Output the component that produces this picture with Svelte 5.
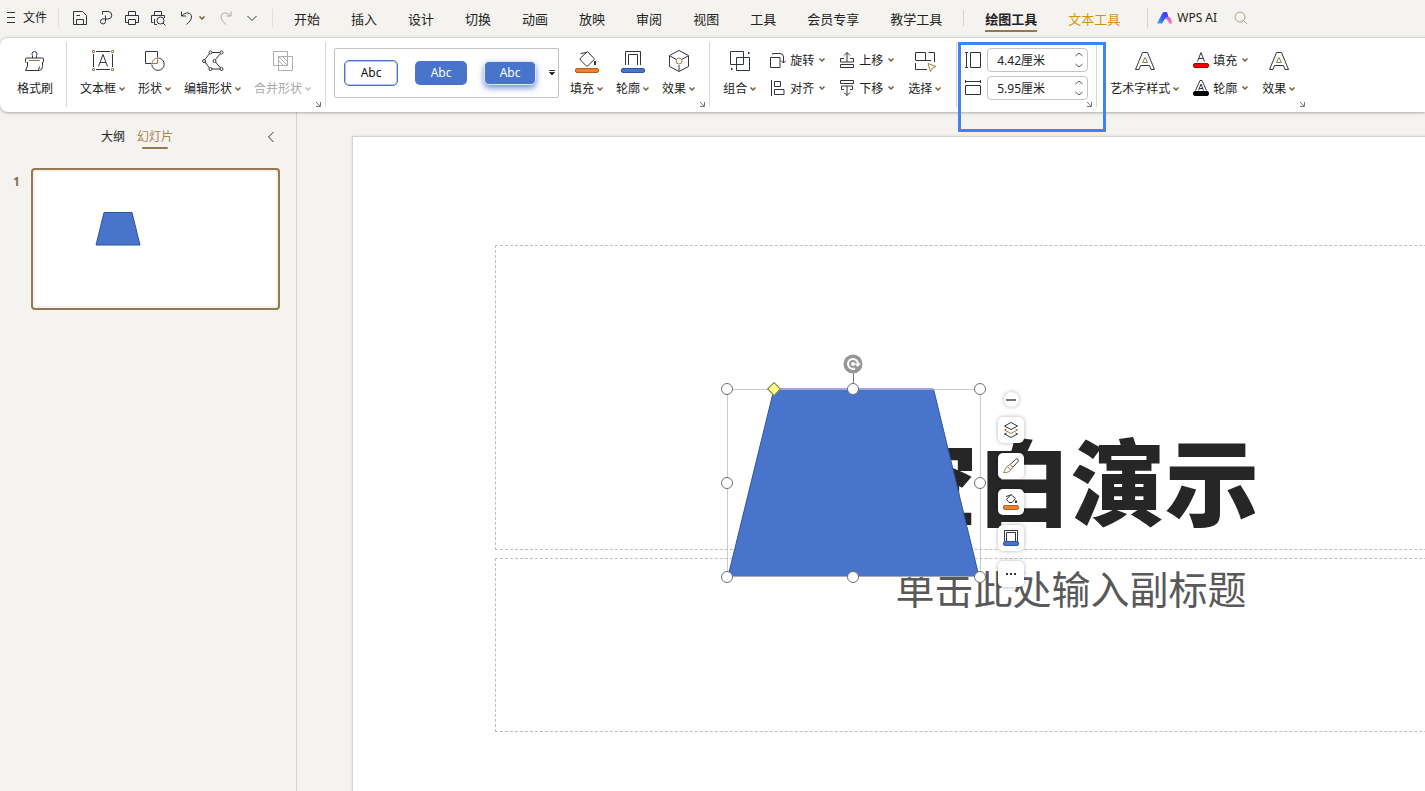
<script>
	let activeTab = $state('绘图工具');
	let sideTab = $state('幻灯片');
	let shapeHeight = $state('4.42厘米');
	let shapeWidth = $state('5.95厘米');

	const tabs = ['开始', '插入', '设计', '切换', '动画', '放映', '审阅', '视图', '工具', '会员专享', '教学工具'];

	const shapeTools = [
		{ icon: 'textbox', label: '文本框' },
		{ icon: 'shapes', label: '形状' },
		{ icon: 'editpoints', label: '编辑形状' },
		{ icon: 'merge', label: '合并形状', disabled: true }
	];

	const styleTools = [
		{ icon: 'fill', label: '填充' },
		{ icon: 'outline', label: '轮廓' },
		{ icon: 'effect', label: '效果' }
	];

	const handles = ['nw', 'n', 'ne', 'w', 'e', 'sw', 's', 'se'];

	const floatTools = [
		{ icon: 'layers', label: '图层' },
		{ icon: 'brush', label: '格式刷' },
		{ icon: 'minifill', label: '填充' },
		{ icon: 'minioutline', label: '轮廓' },
		{ icon: 'dots', label: '更多' }
	];

	function step(value, by) {
		return (parseFloat(value) + by).toFixed(2) + '厘米';
	}
</script>

{#snippet caret()}
	<svg class="caret" width="6" height="4" viewBox="0 0 6 4"><path d="M.5 .5L3 3L5.5 .5" /></svg>
{/snippet}

{#snippet launcher()}
	<button class="launcher" aria-label="更多设置">
		<svg width="7" height="7" viewBox="0 0 7 7"><path d="M1 1L5 5M5.5 1V5.5H1" /></svg>
	</button>
{/snippet}

{#snippet icon(name)}
	{#if name === 'painter'}
		<svg width="24" height="24" viewBox="0 0 24 24">
			<path d="M9.5 9V6.500a3 3 0 0 1-.500-1.500a2.500 2.500 0 0 1 5 0a3 3 0 0 1-.500 1.500V9" />
			<path d="M3.5 13.500a1 1 0 0 1-1-1V10a1 1 0 0 1 1-1H19.500a1 1 0 0 1 1 1V12.500a1 1 0 0 1-1 1" />
			<path class="gold" d="M6 11.500H17" />
			<path d="M4.500 13V17L2.500 21.500H16.500Q19.500 21 19.500 17.500V13M15.500 21L16.500 17.500" />
		</svg>
	{:else if name === 'textbox'}
		<svg width="24" height="24" viewBox="0 0 24 24">
			<path d="M5 2.5H19M5 20.5H19M2.5 5V18M21.5 5V18" />
			<path d="M7.5 17.5L12 5.5L16.5 17.5M9 13.5H15" />
			<path class="gold" d="M1.5 1.5h2v2h-2zM20.5 1.5h2v2h-2zM1.5 19.5h2v2h-2zM20.5 19.5h2v2h-2z" />
		</svg>
	{:else if name === 'shapes'}
		<svg width="24" height="24" viewBox="0 0 24 24">
			<path d="M8.5 14.5H2.5V2.5H14.5V8.5" />
			<path d="M15.5 9a6.2 6.2 0 1 1-6.7 6.5" />
			<path class="gold" d="M9 14.5a6.2 6.2 0 0 1 5.5-5.500v5.500z" />
		</svg>
	{:else if name === 'editpoints'}
		<svg width="24" height="24" viewBox="0 0 24 24">
			<path d="M11 3.5H19M8.5 4.5L4 10.5M4 13L8.5 19M11 20H19M19.5 4.5L14.5 10.5M14.5 13L19.5 19" />
			<circle cx="9.5" cy="3.5" r="1.5" /><circle cx="20.5" cy="3.5" r="1.5" />
			<circle cx="3" cy="12" r="1.5" /><circle cx="13.5" cy="12" r="1.5" />
			<circle cx="9.5" cy="20" r="1.5" /><circle cx="20.5" cy="20" r="1.5" />
		</svg>
	{:else if name === 'merge'}
		<svg width="24" height="24" viewBox="0 0 24 24">
			<path d="M2.5 2.5h14v14h-14zM7.5 7.5h14v14h-14zM8 8L16 16M8 12L12 16M12 8L16 12" />
		</svg>
	{:else if name === 'fill'}
		<svg width="24" height="24" viewBox="0 0 24 24">
			<path d="M12.5 2.5L19 9.5a1 1 0 0 1 0 1.3L13 16.7a1.5 1.5 0 0 1-2 0L5.5 11a1.5 1.5 0 0 1 0-2zM5.5 4.5L12 3.5" />
			<path class="thick" d="M20 12v4" />
			<rect class="orange" x=".5" y="19.5" width="23" height="4" rx="1.5" />
		</svg>
	{:else if name === 'outline'}
		<svg width="24" height="24" viewBox="0 0 24 24">
			<path d="M4.5 16V2.5H19.5V16M7.5 16V5.5H16.5V16" />
			<rect class="blue" x=".5" y="19.5" width="23" height="4" rx="1.5" />
		</svg>
	{:else if name === 'effect'}
		<svg width="24" height="24" viewBox="0 0 24 24">
			<path d="M12 1.5L21.5 6.5V17.5L12 22.5L2.5 17.5V6.5zM3 7L9 10.3M21 7L15 10.3M12 16V22" />
			<circle class="gold" cx="12" cy="12" r="3" />
		</svg>
	{:else if name === 'group'}
		<svg width="24" height="24" viewBox="0 0 24 24">
			<path d="M2.5 2.5h13v13h-13zM8.5 8.5h13v13h-13z" />
			<path class="thick" d="M20 4h1.5M3 20h1.5" />
		</svg>
	{:else if name === 'select'}
		<svg width="24" height="24" viewBox="0 0 24 24">
			<path d="M2.5 11V3.5H12.5V11.5H2.5M15.5 3.5H21.5V13M2.5 14V20.5H14M12.5 11.5H18" />
			<path class="gold" d="M15 14.5L23 17.5L19.5 19L17.5 22.5z" />
		</svg>
	{:else if name === 'wordart'}
		<svg width="24" height="24" viewBox="0 0 24 24">
			<path d="M2.500 20.500L9.500 3.500H14.500L21.500 20.500H18L16.500 16.500H7.500L6 20.500z" />
			<path class="gold" d="M12 8.500L14.500 13.500H9.500z" />
		</svg>
	{:else if name === 'rotate'}
		<svg width="16" height="16" viewBox="0 0 16 16">
			<path d="M.5 5.5h9.5v10H.5zM2.5 2.5V1.5H10a3.5 3.5 0 0 1 3.5 3.5v6M11 8.5l2.5 2.5L16 8.5" />
		</svg>
	{:else if name === 'align'}
		<svg width="16" height="16" viewBox="0 0 16 16">
			<path d="M1.5 0V16M4.5 1.5h6v5h-6zM4.5 9.5h9.5v5H4.5z" />
		</svg>
	{:else if name === 'raise'}
		<svg width="16" height="16" viewBox="0 0 16 16">
			<path d="M1.5 12.5h13v3H1.5zM8 10V.5M5 3.5l3-3l3 3M5 6.5H1.5v3.5h13V6.5H11" />
		</svg>
	{:else if name === 'lower'}
		<svg width="16" height="16" viewBox="0 0 16 16">
			<path d="M1.5 .5h13v3H1.5zM8 6V15.5M5 12.5l3 3l3-3M5 9.5H2.5V6H13.5v3.5H11" />
		</svg>
	{:else if name === 'height'}
		<svg width="16" height="16" viewBox="0 0 16 16"><path d="M0 .5H3M1.5 .5V15.5M0 15.5H3M5.5 .5h10v15h-10z" /></svg>
	{:else if name === 'width'}
		<svg width="16" height="16" viewBox="0 0 16 16"><path d="M.5 0V3M.5 1.5H15.5M15.5 0V3M.5 5.5h15v9H.5z" /></svg>
	{:else if name === 'textfill'}
		<svg width="16" height="16" viewBox="0 0 16 16">
			<path d="M4.5 9.5L8 .5L11.5 9.5M5.5 6.5H10.5" />
			<rect class="red" x=".5" y="11.5" width="15" height="4" rx="1.5" />
		</svg>
	{:else if name === 'textoutline'}
		<svg width="16" height="16" viewBox="0 0 16 16">
			<path d="M2.5 10.5L7 .5H9L13.5 10.5M5.5 10.5L8 4L10.5 10.5M6 8.5H10" />
			<rect class="black" x=".5" y="11.5" width="15" height="4" rx="1.5" />
		</svg>
	{:else if name === 'save'}
		<svg width="16" height="16" viewBox="0 0 16 16">
			<path d="M1.5 1.5h9l4 4v9H1.5zM4.5 14V9.5h7V14M4.5 5.5H8" />
		</svg>
	{:else if name === 'pdf'}
		<svg width="16" height="16" viewBox="0 0 16 16">
			<path d="M4.5 4.5V1.5H10a3.5 3.5 0 0 1 0 7.5H4.5a2.5 2.5 0 1 0 3 2.5V5.5" />
		</svg>
	{:else if name === 'print'}
		<svg width="16" height="16" viewBox="0 0 16 16">
			<path d="M4.5 5V1.5h7V5M4 12.5H1.5V5.5h13v7H12M4.5 9.5h7v5h-7z" />
		</svg>
	{:else if name === 'preview'}
		<svg width="16" height="16" viewBox="0 0 16 16">
			<path d="M4.5 5V1.5h7V5M3.5 12.5H1.5V5.5h13V8M4.5 9V14.5H7M13 13l2.5 2.5" />
			<circle cx="10.5" cy="10.5" r="3.5" />
		</svg>
	{:else if name === 'undo'}
		<svg width="16" height="16" viewBox="0 0 16 16"><path d="M2.5 1.5v4.5H7M3 6C6 1.5 12.5 2 12.5 7C12.5 10 10 12 7.5 14.5" /></svg>
	{:else if name === 'redo'}
		<svg width="16" height="16" viewBox="0 0 16 16"><path d="M13 1.5v4.5H8.5M12.5 6C9.5 1.5 3 2 3 7C3 10 5.5 12 8 14.5" /></svg>
	{:else if name === 'down'}
		<svg width="16" height="16" viewBox="0 0 16 16"><path d="M3.5 6L8 10.5L12.5 6" /></svg>
	{:else if name === 'layers'}
		<svg width="16" height="16" viewBox="0 0 16 16">
			<path d="M8 .5L14.5 4L8 7.5L1.5 4zM3.5 11L1.5 12L8 15.5L14.5 12L12.5 11" />
			<path class="gold" d="M3.5 7L1.5 8L8 11.5L14.5 8L12.5 7" />
		</svg>
	{:else if name === 'brush'}
		<svg width="16" height="16" viewBox="0 0 16 16">
			<path d="M7 6.5L12.5 1.5a1.5 1.5 0 0 1 2.5 2L10 9" />
			<path class="gold" d="M7 6.5L10 9L7.5 12.5C5.5 14.5 3 14.5 .5 14.5C2 13 2 10.5 4 8.5zM4.5 8.5L7.5 12" />
		</svg>
	{:else if name === 'minifill'}
		<svg width="16" height="16" viewBox="0 0 16 16">
			<path d="M8 .5L12.5 4.5L9 8.5H6L3.5 5.5zM3 2.5L8 1" />
			<path class="thick" d="M13 6.5v2.5" />
			<rect class="orange" x=".5" y="11.5" width="15" height="4" rx="1.5" />
		</svg>
	{:else if name === 'minioutline'}
		<svg width="16" height="16" viewBox="0 0 16 16">
			<path d="M1.5 12V.5h13V12M3.5 12V2.5h9V12" />
			<rect class="blue" x=".5" y="11.5" width="15" height="4" rx="1.5" />
		</svg>
	{:else if name === 'dots'}
		<svg width="16" height="16" viewBox="0 0 16 16"><path class="thick" d="M3 8h2M7 8h2M11 8h2" /></svg>
	{/if}
{/snippet}

{#snippet bigTool(name, label, disabled = false)}
	<button class="big-tool" {disabled}>
		{@render icon(name)}
		<span class="label">{label}{@render caret()}</span>
	</button>
{/snippet}

{#snippet smallTool(name, label)}
	<button class="small-tool">
		{@render icon(name)}
		<span>{label}</span>
		{@render caret()}
	</button>
{/snippet}

<div class="app">
	<header class="topbar">
		<button class="file">
			<svg width="9" height="12" viewBox="0 0 9 12"><path d="M0 .5H8M0 5.5H8M0 10.5H8" /></svg>
			文件
		</button>
		<div class="quick">
			<button aria-label="保存">{@render icon('save')}</button>
			<button aria-label="输出为PDF">{@render icon('pdf')}</button>
			<button aria-label="打印">{@render icon('print')}</button>
			<button aria-label="打印预览">{@render icon('preview')}</button>
		</div>
		<div class="history">
			<button class="undo" aria-label="撤销">{@render icon('undo')}{@render caret()}</button>
			<button class="redo" aria-label="恢复" disabled>{@render icon('redo')}</button>
			<button aria-label="自定义">{@render icon('down')}</button>
		</div>
		<nav class="tabs">
			{#each tabs as tab}
				<button class:active={activeTab === tab} onclick={() => (activeTab = tab)}>{tab}</button>
			{/each}
		</nav>
		<nav class="tabs context">
			<button class:active={activeTab === '绘图工具'} onclick={() => (activeTab = '绘图工具')}>绘图工具</button>
			<button class="text-tab" class:active={activeTab === '文本工具'} onclick={() => (activeTab = '文本工具')}>文本工具</button>
		</nav>
		<div class="ai">
			<button>
				<svg width="16" height="14" viewBox="0 0 16 14">
					<defs>
						<linearGradient id="ai-a" x1="0" y1="1" x2="1" y2="0">
							<stop offset="0" stop-color="#35b6ff" />
							<stop offset=".5" stop-color="#3a55ff" />
							<stop offset="1" stop-color="#4a35f0" />
						</linearGradient>
						<linearGradient id="ai-b" x1="0" y1="0" x2="1" y2="1">
							<stop offset="0" stop-color="#d43cff" />
							<stop offset="1" stop-color="#ff8c8c" />
						</linearGradient>
					</defs>
					<path fill="url(#ai-a)" stroke="none" d="M0 12.5L5.5 2Q6 1 7.5 1H10L11.5 6L8.5 7L5 12.5z" />
					<path fill="url(#ai-b)" stroke="none" d="M8 7.5Q13 4.5 14 8L15.5 12.5H12Q11 8 8 7.5z" />
				</svg>
				WPS AI
			</button>
			<button class="search" aria-label="搜索">
				<svg width="14" height="14" viewBox="0 0 14 14"><circle cx="6" cy="6" r="5" /><path d="M9.5 9.5L13 13" /></svg>
			</button>
		</div>
	</header>

	<section class="ribbon">
		<div class="group paint">
			<button class="big-tool">{@render icon('painter')}<span class="label">格式刷</span></button>
		</div>
		<div class="group">
			{#each shapeTools as t}
				{@render bigTool(t.icon, t.label, t.disabled)}
			{/each}
			{@render launcher()}
		</div>
		<div class="group styles">
			<div class="gallery">
				<button class="preset">Abc</button>
				<button class="preset solid">Abc</button>
				<button class="preset solid raised">Abc</button>
				<button class="more" aria-label="更多样式">
					<svg width="8" height="6" viewBox="0 0 8 6"><path d="M1 .5H7M1.5 2.5L4 5L6.5 2.5z" /></svg>
				</button>
			</div>
			{#each styleTools as t}
				{@render bigTool(t.icon, t.label)}
			{/each}
			{@render launcher()}
		</div>
		<div class="group wide">
			{@render bigTool('group', '组合')}
			<div class="stack">
				{@render smallTool('rotate', '旋转')}
				{@render smallTool('align', '对齐')}
			</div>
			<div class="stack">
				{@render smallTool('raise', '上移')}
				{@render smallTool('lower', '下移')}
			</div>
			{@render bigTool('select', '选择')}
		</div>
		<div class="group size">
			<div class="stack">
				<div class="field">
					<label for="shape-height" aria-label="高度">{@render icon('height')}</label>
					<div class="spin">
						<input id="shape-height" type="text" bind:value={shapeHeight} />
						<div class="steps">
							<button aria-label="增大高度" onclick={() => (shapeHeight = step(shapeHeight, 0.1))}>
								<svg width="8" height="5" viewBox="0 0 8 5"><path d="M.5 4L4 1L7.5 4" /></svg>
							</button>
							<button aria-label="减小高度" onclick={() => (shapeHeight = step(shapeHeight, -0.1))}>
								<svg width="8" height="5" viewBox="0 0 8 5"><path d="M.5 1L4 4L7.5 1" /></svg>
							</button>
						</div>
					</div>
				</div>
				<div class="field">
					<label for="shape-width" aria-label="宽度">{@render icon('width')}</label>
					<div class="spin">
						<input id="shape-width" type="text" bind:value={shapeWidth} />
						<div class="steps">
							<button aria-label="增大宽度" onclick={() => (shapeWidth = step(shapeWidth, 0.1))}>
								<svg width="8" height="5" viewBox="0 0 8 5"><path d="M.5 4L4 1L7.5 4" /></svg>
							</button>
							<button aria-label="减小宽度" onclick={() => (shapeWidth = step(shapeWidth, -0.1))}>
								<svg width="8" height="5" viewBox="0 0 8 5"><path d="M.5 1L4 4L7.5 1" /></svg>
							</button>
						</div>
					</div>
				</div>
			</div>
			{@render launcher()}
			<div class="callout"></div>
		</div>
		<div class="group wide last">
			{@render bigTool('wordart', '艺术字样式')}
			<div class="stack">
				{@render smallTool('textfill', '填充')}
				{@render smallTool('textoutline', '轮廓')}
			</div>
			{@render bigTool('wordart', '效果')}
			{@render launcher()}
		</div>
	</section>

	<div class="body">
		<aside class="sidebar">
			<div class="side-head">
				<button class:active={sideTab === '大纲'} onclick={() => (sideTab = '大纲')}>大纲</button>
				<button class:active={sideTab === '幻灯片'} onclick={() => (sideTab = '幻灯片')}>幻灯片</button>
				<button class="collapse" aria-label="收起">
					<svg width="8" height="12" viewBox="0 0 8 12"><path d="M6.5 1L1.5 6L6.5 11" /></svg>
				</button>
			</div>
			<div class="thumb-row">
				<span class="number">1</span>
				<button class="thumb" aria-label="幻灯片 1">
					<svg viewBox="0 0 241 134"><path class="trapezoid" d="M69 40.5H97L105 73H61z" /></svg>
				</button>
			</div>
		</aside>

		<main class="stage">
			<div class="slide">
				<div class="placeholder title"><h1>空白演示</h1></div>
				<div class="placeholder subtitle"><p>单击此处输入副标题</p></div>

				<div class="selection">
					<svg class="shape" width="254" height="190" viewBox="0 0 254 190">
						<path class="trapezoid" d="M47 1H206.5L252 188.5H1z" />
					</svg>
					<div class="frame"></div>
					<div class="stem"></div>
					<div class="rotator">
						<svg width="20" height="20" viewBox="0 0 20 20">
							<circle cx="10" cy="10" r="9.5" />
							<path d="M12 14.5A5 5 0 1 1 15 10" />
							<path class="head" d="M11.5 9.5H18L14.5 13z" />
							<circle class="core" cx="10" cy="10" r="2" />
						</svg>
					</div>
					{#each handles as h}
						<span class="handle {h}"></span>
					{/each}
					<span class="adjust"></span>
				</div>

				<div class="float-bar">
					<button class="minus" aria-label="收起工具">
						<svg width="10" height="2" viewBox="0 0 10 2"><path d="M0 1H10" /></svg>
					</button>
					{#each floatTools as t}
						<button class="float" aria-label={t.label}>{@render icon(t.icon)}</button>
					{/each}
				</div>
			</div>
		</main>
	</div>
</div>

<style>
	:global(body) {
		margin: 0;
		background: #f4f3ef;
	}

	.app {
		display: flex;
		flex-direction: column;
		height: 100vh;
		overflow: hidden;
		background: #f4f3ef;
		color: #222;
		font-family: "Noto Sans", "Noto Sans CJK SC", sans-serif;
		font-size: 12px;
		line-height: 16px;
	}

	button {
		display: flex;
		align-items: center;
		padding: 0;
		border: 0;
		background: none;
		color: inherit;
		font: inherit;
		white-space: nowrap;
		cursor: pointer;
	}

	svg {
		display: block;
		flex: none;
		fill: none;
		stroke: #30343f;
		stroke-width: 1;
	}

	.gold { stroke: #a07c48; }
	.thick { stroke-width: 2; }
	.orange { fill: #ee822f; stroke: #b85f1c; }
	.blue { fill: #4874cb; stroke: #2f55a4; }
	.red { fill: #f00; stroke: #b00000; }
	.black { fill: #000; stroke: #000; }
	.trapezoid { fill: #4874cb; stroke: #2f55a4; }

	.caret {
		stroke: #7a5f38;
		stroke-width: 1.5;
	}

	/* top bar */
	.topbar {
		display: flex;
		align-items: center;
		box-sizing: border-box;
		flex: none;
		height: 37px;
		padding: 0 0 1px 7px;
	}

	.file {
		gap: 7px;
		height: 18px;
		padding-right: 11px;
		border-right: 1px solid #e3dfd6;
	}

	.quick {
		display: flex;
		gap: 10px;
		padding: 0 13px;
	}

	.history {
		display: flex;
		align-items: center;
		height: 18px;
		padding-right: 12px;
		border-right: 1px solid #e3dfd6;
	}

	.undo {
		gap: 4px;
		padding-right: 13px;
	}

	.redo {
		padding-right: 10px;
		opacity: 0.4;
	}

	.tabs {
		display: flex;
		gap: 31px;
		padding: 0 21px;
		font-size: 13px;
		line-height: 18px;
	}

	.tabs button {
		height: 28px;
		padding-top: 3px;
		border-bottom: 2px solid transparent;
		box-sizing: border-box;
	}

	.tabs.context {
		padding: 0 27px 0 22px;
		background: linear-gradient(#d6d3cc, #d6d3cc) left center / 1px 16px no-repeat;
	}

	.tabs .active {
		border-color: #957850;
		font-weight: bold;
	}

	.tabs .text-tab {
		color: #d9920f;
	}

	.ai {
		display: flex;
		gap: 17px;
		height: 20px;
		padding-left: 9px;
		border-left: 1px solid #d6d3cc;
	}

	.ai button {
		gap: 4px;
	}

	.search svg {
		stroke: #b3a387;
	}

	/* ribbon */
	.ribbon {
		display: flex;
		flex: none;
		padding: 4px 0 5px;
		border-top: 1px solid #d5d5d3;
		border-radius: 8px 0 0 8px;
		background: #fff;
		box-shadow: 0 1px 3px rgba(0, 0, 0, 0.3);
		position: relative;
		z-index: 2;
	}

	.group {
		position: relative;
		display: flex;
		align-items: flex-start;
		gap: 13px;
		height: 65px;
		padding: 0 14px 0 13px;
		border-right: 1px solid #d8d8d8;
	}

	.group.paint {
		padding: 0 13px 0 17px;
	}

	.group.wide {
		gap: 14px;
		padding-right: 15px;
	}

	.group.styles {
		padding-left: 8px;
	}

	.group.size {
		padding: 0 8px;
	}

	.group.last {
		padding-right: 11px;
		border-right: 0;
	}

	.big-tool {
		flex-direction: column;
		gap: 8px;
		padding-top: 7px;
	}

	.big-tool:disabled {
		opacity: 0.4;
		cursor: default;
	}

	.label {
		display: flex;
		align-items: center;
		gap: 3px;
	}

	.stack {
		display: flex;
		flex-direction: column;
		gap: 4px;
		padding-top: 6px;
	}

	.small-tool {
		gap: 4px;
		height: 24px;
	}

	.small-tool span {
		padding-top: 2px;
	}

	.small-tool .caret {
		margin-left: 1px;
	}

	.launcher {
		position: absolute;
		right: 3px;
		bottom: -1px;
	}

	.group.last .launcher {
		right: 0;
	}

	.launcher svg {
		stroke: #777;
	}

	.gallery {
		display: flex;
		align-items: center;
		box-sizing: border-box;
		gap: 17px;
		width: 225px;
		height: 50px;
		margin-top: 6px;
		margin-right: -2px;
		padding-left: 9px;
		border: 1px solid #c3c3c3;
		border-radius: 2px;
	}

	.preset {
		justify-content: center;
		box-sizing: border-box;
		width: 54px;
		height: 26px;
		border: 1px solid #4874cb;
		border-radius: 5px;
		background: #fff;
		box-shadow: inset 0 0 0 1px #b5c7ec;
		color: #111;
	}

	.preset.solid {
		width: 52px;
		height: 24px;
		border: 0;
		background: #4874cb;
		box-shadow: none;
		color: #fff;
	}

	.preset.raised {
		border: 1px solid #dfe8fa;
		box-shadow: 0 3px 6px rgba(72, 116, 203, 0.8);
	}

	.more {
		margin-left: -5px;
	}

	.more svg path {
		fill: #30343f;
	}

	.field {
		display: flex;
		align-items: center;
		gap: 6px;
	}

	.spin {
		display: flex;
		box-sizing: border-box;
		width: 101px;
		height: 24px;
		border: 1px solid #c4c4c4;
		border-radius: 4px;
	}

	.spin input {
		flex: 1;
		min-width: 0;
		padding: 2px 0 0 9px;
		border: 0;
		outline: 0;
		background: none;
		color: #222;
		font: inherit;
	}

	.steps {
		display: flex;
		flex-direction: column;
		justify-content: space-between;
		padding: 3px 4px;
	}

	.steps svg {
		stroke: #555;
	}

	.callout {
		position: absolute;
		inset: 0 -10px -25px 1px;
		border: 3px solid #4282f4;
		pointer-events: none;
		z-index: 3;
	}

	/* slide list */
	.body {
		display: flex;
		flex: 1;
		min-height: 0;
	}

	.sidebar {
		box-sizing: border-box;
		flex: none;
		width: 297px;
		border-right: 1px solid #d5d3ce;
	}

	.side-head {
		display: flex;
		gap: 12px;
		padding: 15px 21px 0 101px;
	}

	.side-head button {
		flex-direction: column;
		height: 23px;
		padding-top: 2px;
		box-sizing: border-box;
	}

	.side-head .active {
		color: #a48450;
	}

	.side-head .active::after {
		content: "";
		width: 26px;
		height: 2px;
		margin-top: 2px;
		border-radius: 1px;
		background: #957850;
	}

	.side-head .collapse {
		margin-left: auto;
		padding-top: 4px;
	}

	.thumb-row {
		display: flex;
		padding: 18px 16px 0 13px;
	}

	.number {
		width: 18px;
		padding-top: 6px;
		color: #86704a;
		font-weight: bold;
	}

	.thumb {
		flex: 1;
		padding: 2px;
		border: 2px solid #957850;
		border-radius: 4px;
	}

	.thumb svg {
		width: 100%;
		border-radius: 2px;
		background: #fff;
	}

	/* editing area */
	.stage {
		flex: 1;
		min-width: 0;
		padding: 24px 0 0 55px;
		overflow: hidden;
	}

	.slide {
		position: relative;
		box-sizing: border-box;
		width: 1438px;
		height: 810px;
		padding: 108px 142px;
		border: 1px solid #d3d2ce;
		background: #fff;
		box-shadow: 0 0 3px rgba(0, 0, 0, 0.12);
	}

	.placeholder {
		display: flex;
		justify-content: center;
		box-sizing: border-box;
		border: 1px dashed #bdbdbd;
		text-align: center;
	}

	.title {
		align-items: flex-end;
		height: 305px;
		margin-bottom: 8px;
	}

	.title h1 {
		margin: 0;
		padding-bottom: 13px;
		color: #262626;
		font-family: "Noto Sans CJK SC", sans-serif;
		font-size: 94px;
		font-weight: 900;
		line-height: 116px;
	}

	.subtitle {
		height: 174px;
	}

	.subtitle p {
		margin: 0;
		padding-top: 4px;
		color: #595959;
		font-size: 39px;
		line-height: 52px;
	}

	.selection {
		position: absolute;
		left: 374px;
		top: 252px;
		width: 254px;
		height: 188px;
	}

	.shape {
		position: absolute;
		inset: -1px 0 0;
	}

	.frame {
		position: absolute;
		inset: 0;
		border: 1px solid rgba(190, 190, 195, 0.8);
	}

	.stem {
		position: absolute;
		left: 126px;
		top: -18px;
		width: 1px;
		height: 18px;
		background: #777;
	}

	.rotator {
		position: absolute;
		left: 116px;
		top: -35px;
	}

	.rotator svg {
		fill: #969696;
		stroke: none;
	}

	.rotator path {
		fill: none;
		stroke: #fff;
		stroke-width: 2;
	}

	.rotator .head,
	.rotator .core {
		fill: #fff;
		stroke: none;
	}

	.handle {
		position: absolute;
		box-sizing: border-box;
		width: 12px;
		height: 12px;
		margin: -6px 0 0 -7px;
		border: 1px solid #707070;
		border-radius: 50%;
		background: #fff;
	}

	.nw, .w, .sw { left: 1px; }
	.n, .s { left: 50%; }
	.ne, .e, .se { left: 100%; }
	.nw, .n, .ne { top: 0; }
	.w, .e { top: 50%; }
	.sw, .s, .se { top: 100%; }

	.adjust {
		position: absolute;
		left: 42px;
		top: -5px;
		width: 8px;
		height: 8px;
		border: 1px solid #707050;
		background: #ffff8a;
		transform: rotate(45deg);
	}

	.float-bar {
		position: absolute;
		left: 645px;
		top: 255px;
		display: flex;
		flex-direction: column;
		align-items: center;
		gap: 10px;
	}

	.float-bar button {
		justify-content: center;
		background: #fff;
		box-shadow: 0 0 4px rgba(0, 0, 0, 0.3);
	}

	.minus {
		width: 15px;
		height: 15px;
		border-radius: 50%;
	}

	.minus svg {
		stroke: #777;
		stroke-width: 2;
	}

	.float {
		width: 26px;
		height: 26px;
		border-radius: 5px;
	}
</style>
